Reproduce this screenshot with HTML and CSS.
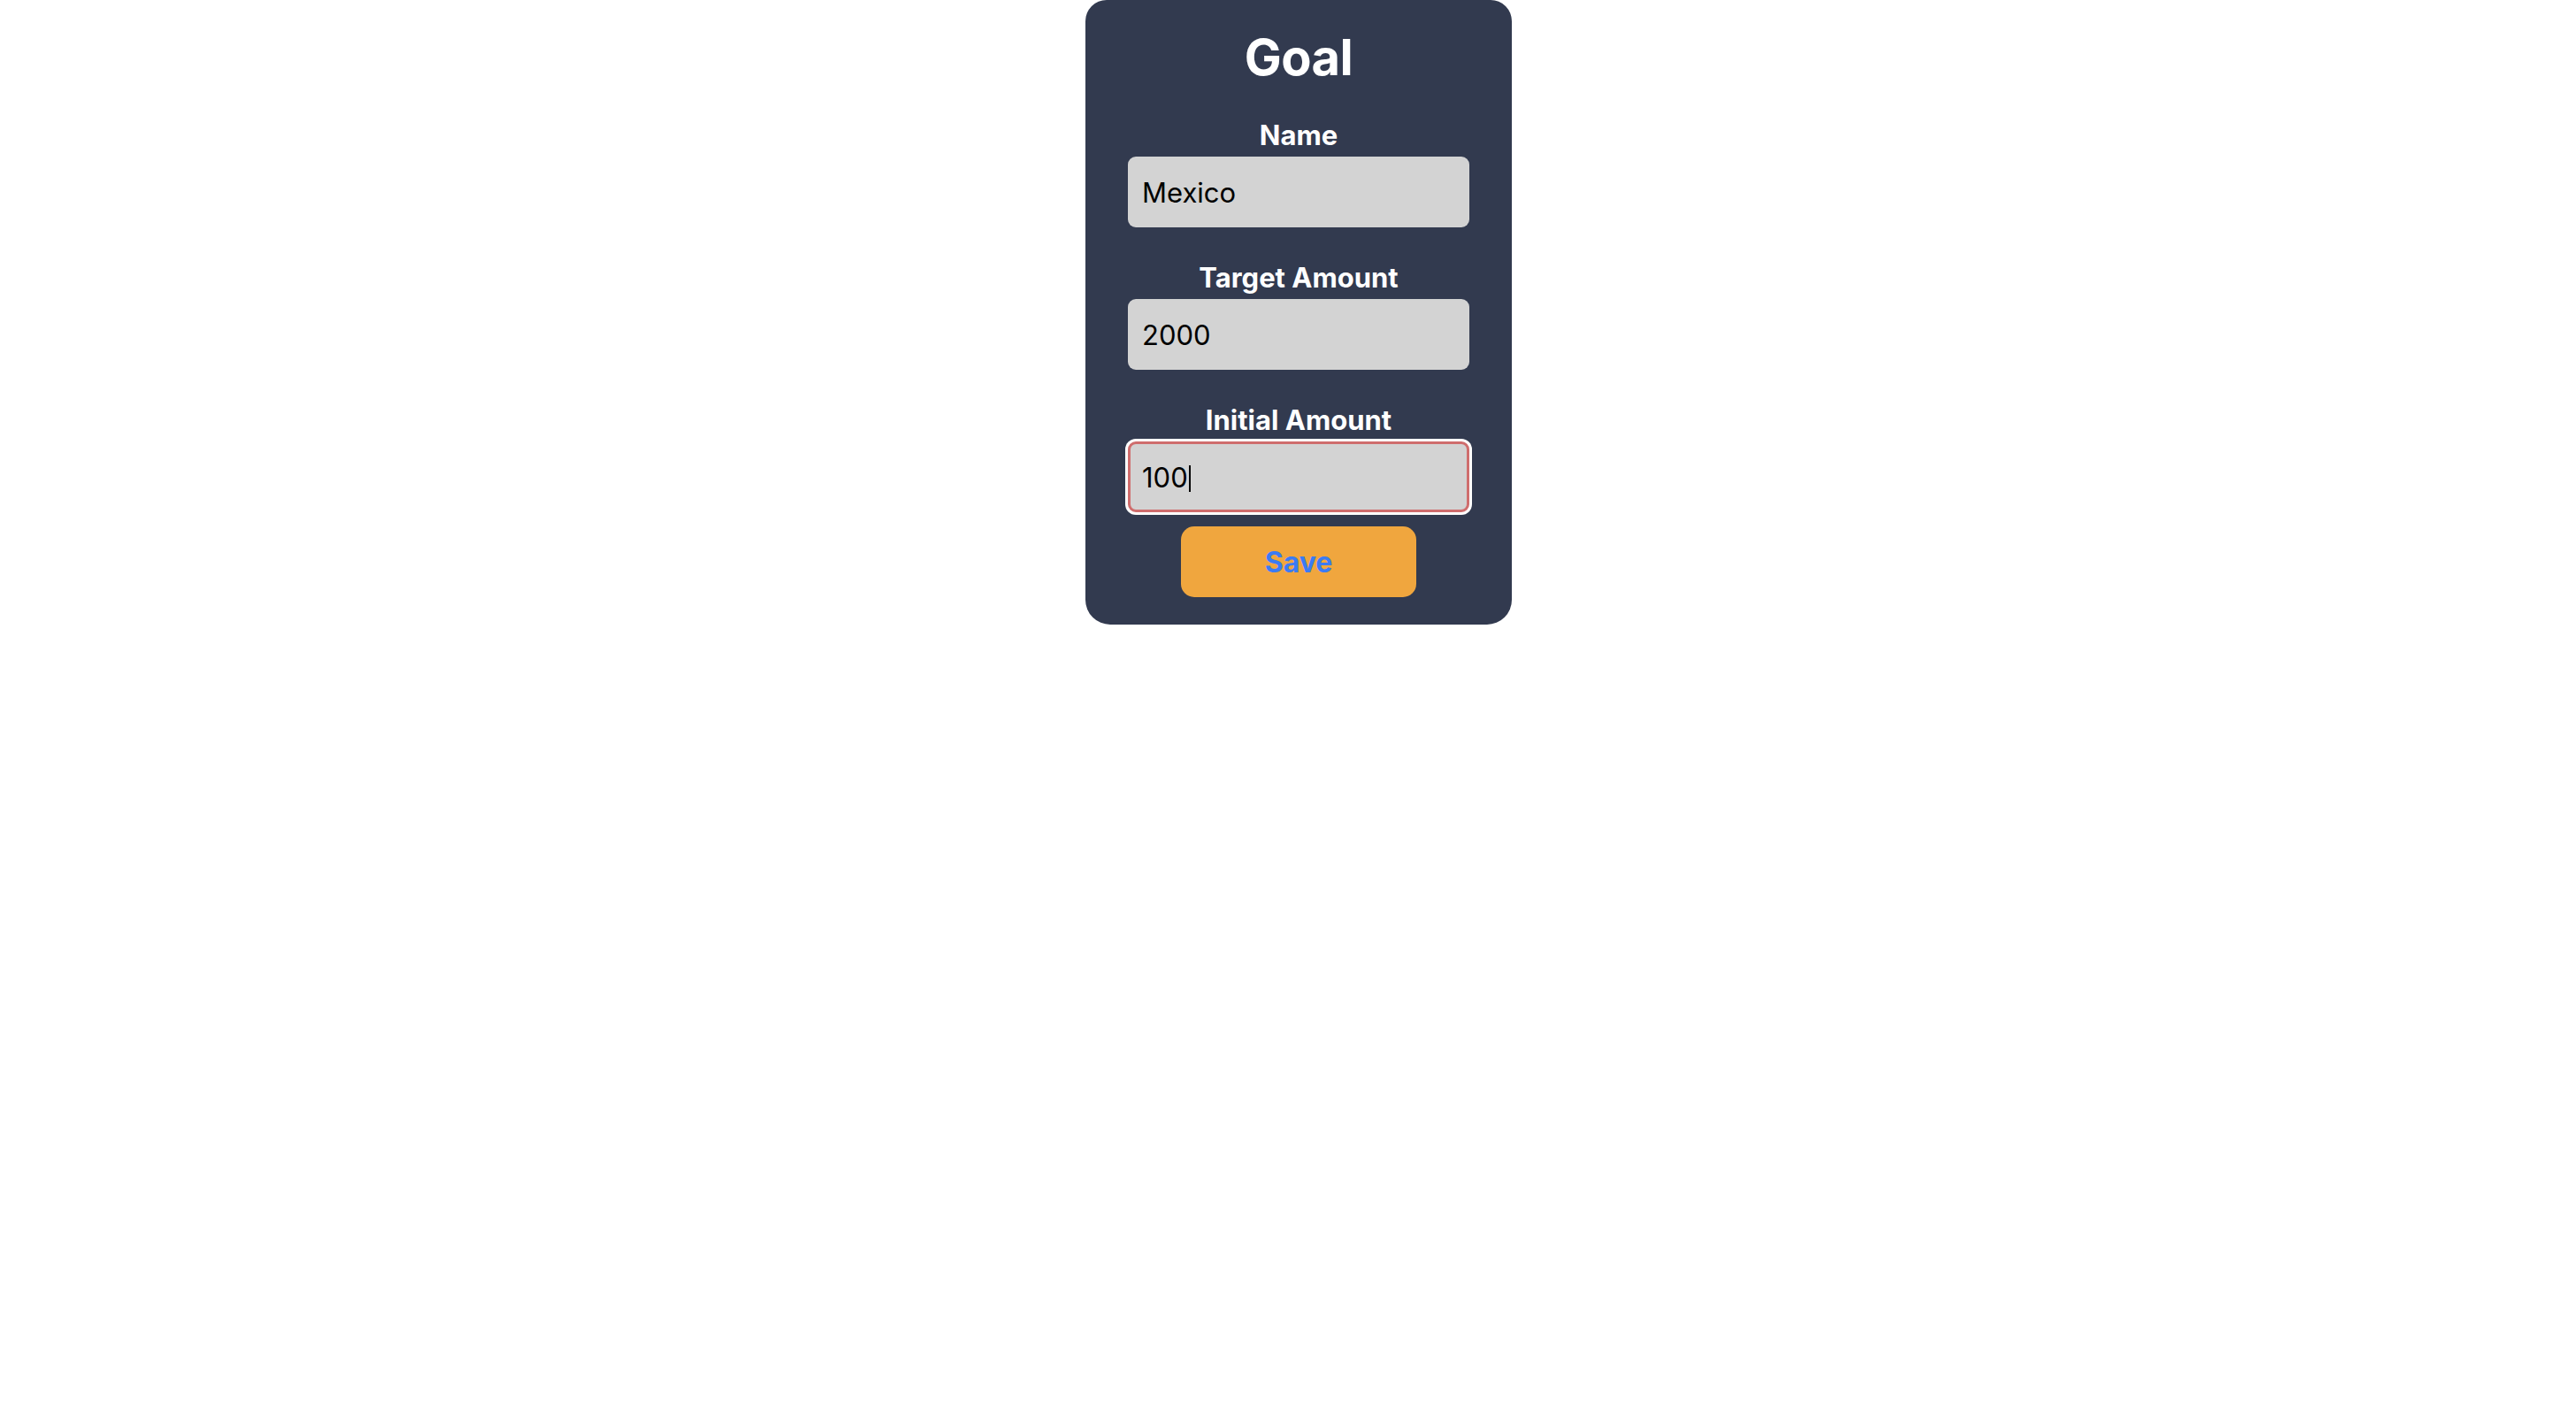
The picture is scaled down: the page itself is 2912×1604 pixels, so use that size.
FILE: index.html
```html
<!DOCTYPE html>
<html lang="en">
<head>
<meta charset="utf-8">
<title>Goal</title>
<link rel="stylesheet" href="styles.css">
</head>
<body>
<main class="page">
  <form class="card">
    <h1 class="title">Goal</h1>
    <div class="field">
      <label class="label">Name</label>
      <div class="input">Mexico</div>
    </div>
    <div class="field">
      <label class="label">Target Amount</label>
      <div class="input">2000</div>
    </div>
    <div class="field">
      <label class="label">Initial Amount</label>
      <div class="input input-focused">100<span class="caret"></span></div>
    </div>
    <button type="button" class="save">Save</button>
  </form>
</main>
</body>
</html>
```

FILE: styles.css
```css
html, body {
  margin: 0;
  padding: 0;
  background: #ffffff;
}

body {
  font-family: Inter, "Noto Sans", "Liberation Sans", sans-serif;
}

.page {
  display: flex;
  justify-content: center;
  padding-left: 24px;
}

.card {
  width: 482px;
  box-sizing: border-box;
  background: #323a4f;
  border-radius: 24px 24px 28px 28px;
  padding: 31px 48px 31px;
  display: flex;
  flex-direction: column;
  align-items: center;
}

.title {
  margin: 0;
  font-size: 56px;
  line-height: 68px;
  font-weight: 700;
  color: #ffffff;
  letter-spacing: -0.5px;
}

.field {
  display: flex;
  flex-direction: column;
  align-items: center;
  width: 100%;
  margin-top: 36px;
}

.field + .field {
  margin-top: 39px;
}

.label {
  font-size: 31px;
  line-height: 36px;
  font-weight: 700;
  color: #ffffff;
}

.input {
  margin-top: 6px;
  width: 386px;
  height: 80px;
  box-sizing: border-box;
  background: #d3d3d3;
  border-radius: 9px;
  padding: 0 16px;
  display: flex;
  align-items: center;
  font-size: 31px;
  color: #000000;
  font-weight: 400;
}

.input-focused {
  border: 3px solid #cf6d6d;
  padding-left: 13px;
  box-shadow: 0 0 0 3px #ffffff;
}

.caret {
  display: inline-block;
  width: 2px;
  height: 30px;
  background: #000000;
  margin-left: 1px;
  margin-top: 3px;
}

.save {
  margin-top: 16px;
  width: 266px;
  height: 80px;
  border: none;
  border-radius: 15px;
  background: #f0a63e;
  color: #3b7bf4;
  font-family: Inter, "Noto Sans", "Liberation Sans", sans-serif;
  font-size: 32px;
  font-weight: 700;
  cursor: pointer;
}
```
